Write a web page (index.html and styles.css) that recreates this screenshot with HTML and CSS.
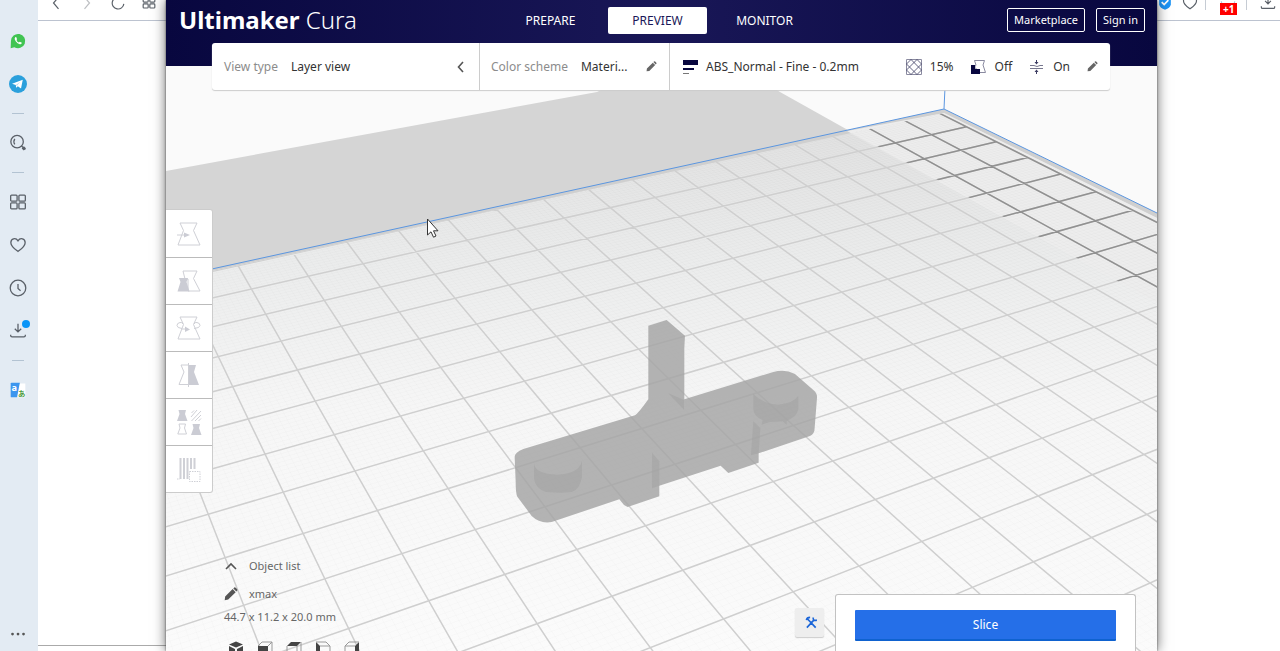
FILE: index.html
```html
<!DOCTYPE html>
<html lang="en">

<head>
    <meta charset="UTF-8">
    <meta name="viewport" content="width=device-width, initial-scale=1.0">
    <title>Ultimaker Cura</title>
    <link rel="stylesheet" href="styles.css">
</head>

<body>
    <!-- shared icons -->
    <svg class="defs" aria-hidden="true">
        <symbol id="pencil" viewBox="0 0 12 12">
            <path d="M1 8.2 7.4 1.8 10 4.4 3.6 10.8 .6 11.3zM8 1.2 8.8.5Q9.4 0 10 .6L11.3 1.9Q11.8 2.5 11.3 3.1L10.6 3.8z" />
        </symbol>
        <symbol id="grid" viewBox="0 0 24 24">
            <rect x="5" y="6" width="6" height="5" rx="1" />
            <rect x="13" y="6" width="6" height="5" rx="1" />
            <rect x="5" y="13" width="6" height="5" rx="1" />
            <rect x="13" y="13" width="6" height="5" rx="1" />
        </symbol>
        <symbol id="heart" viewBox="0 0 24 24">
            <path d="M12 19C8 16 4.200 13.500 4.200 9.500 4.200 5 9.500 3.500 12 7.500 14.500 3.500 19.800 5 19.800 9.500 19.800 13.500 16 16 12 19z" />
        </symbol>
        <symbol id="download" viewBox="0 0 24 24">
            <path d="M12 4V13M8.500 9.500 12 13 15.500 9.500M4 16V17Q4 18.500 5.500 18.500H18.500Q20 18.500 20 17V16" />
        </symbol>
    </svg>

    <div class="browser">
        <nav class="sidebar">
            <a href="#" aria-label="WhatsApp"><svg viewBox="0 0 24 24">
                    <path d="M4 20 4.300 12A7.800 7.800 0 1 1 8 18.700z" fill="#41c452" />
                    <path d="M8.800 8Q7.500 9.500 9.500 12.200T14 15.500Q16 16 16.200 14L14 12.800 13 13.700Q11.200 13 10.300 10.800L11 10 10 7.700z" fill="#fff" />
                </svg></a>
            <a href="#" aria-label="Telegram"><svg viewBox="0 0 24 24">
                    <circle cx="12" cy="12" r="9.800" fill="#2ba0dc" />
                    <path d="M5.500 11.800 17.200 7.300 15.300 17 11.800 14.500 10 16.200 9.600 13.200z" fill="#fff" />
                    <path d="M9.600 13.200 14.500 9.500 10.800 14z" fill="#b9d9ee" />
                </svg></a>
            <hr>
            <button type="button" aria-label="Search"><svg class="line" viewBox="0 0 24 24">
                    <circle cx="11" cy="10.500" r="6.800" />
                    <path d="M8.500 7.500Q6.500 10.500 8.500 13.500M15.800 15.200 20 19" />
                    <path d="M17.200 16.800 19.500 19" stroke-width="3.500" />
                </svg></button>
            <hr>
            <button type="button" aria-label="Speed dial"><svg class="line" viewBox="0 0 24 24">
                    <rect x="4" y="4.500" width="7" height="6.500" rx="1" />
                    <rect x="13" y="4.500" width="7" height="6.500" rx="1" />
                    <rect x="4" y="13" width="7" height="6.500" rx="1" />
                    <rect x="13" y="13" width="7" height="6.500" rx="1" />
                </svg></button>
            <button type="button" aria-label="Bookmarks"><svg class="line"><use href="#heart" /></svg></button>
            <button type="button" aria-label="History"><svg class="line" viewBox="0 0 24 24">
                    <circle cx="12" cy="12" r="8.500" />
                    <path d="M12 7.500V12.500L14.800 15" />
                </svg></button>
            <button type="button" aria-label="Downloads"><svg class="line"><use href="#download" /></svg><span class="dot"></span></button>
            <hr>
            <button type="button" aria-label="Translate"><svg viewBox="0 0 24 24">
                    <path d="M12 5H20V20H10z" fill="#fff" />
                    <path d="M5 4H14L11 20H5Q4 20 4 19V5Q4 4 5 4z" fill="#3d96ee" />
                    <text x="5" y="13" font-size="10" font-weight="700" fill="#fff">a</text>
                    <text x="12" y="18" font-size="8" font-weight="700" fill="#4a9a3c">あ</text>
                </svg></button>
            <button type="button" class="more" aria-label="More"><svg viewBox="0 0 24 24" fill="#555">
                    <circle cx="6" cy="12" r="1.500" />
                    <circle cx="12" cy="12" r="1.500" />
                    <circle cx="18" cy="12" r="1.500" />
                </svg></button>
        </nav>
        <div class="page">
            <div class="topbar">
                <div class="nav-buttons">
                    <button type="button" aria-label="Back"><svg class="line" viewBox="0 0 24 24"><path d="M15 5 9 12 15 19" /></svg></button>
                    <button type="button" aria-label="Forward" disabled><svg class="line" viewBox="0 0 24 24"><path d="M9 5 15 12 9 19" /></svg></button>
                    <button type="button" aria-label="Reload"><svg class="line" viewBox="0 0 24 24"><path d="M19 13A7 7 0 1 1 14 5.500" /></svg></button>
                    <button type="button" aria-label="Tabs"><svg class="line" viewBox="0 0 24 24"><use href="#grid" /></svg></button>
                </div>
                <div class="extensions">
                    <svg viewBox="0 0 24 24">
                        <path d="M5 4H19V14Q18 18 12 20 6 18 5 14z" fill="#1b93f5" />
                        <path d="M8 11 11 14 16 8.500" fill="none" stroke="#fff" stroke-width="2" />
                    </svg>
                    <svg class="line"><use href="#heart" /></svg>
                    <i></i>
                    <span class="ext"><svg class="line" viewBox="0 0 24 24"><path d="M4 10Q4 14 8 14H16Q20 14 20 10" stroke="#b4cbdc" /></svg><b>+1</b></span>
                    <i></i>
                    <svg class="line save"><use href="#download" /></svg>
                </div>
            </div>
            <div class="status"></div>
        </div>
    </div>

    <main class="cura">
        <header class="header">
            <h1><b>Ultimaker</b> Cura</h1>
            <nav class="stages">
                <button type="button">PREPARE</button>
                <button type="button" class="on">PREVIEW</button>
                <button type="button">MONITOR</button>
            </nav>
            <div class="account">
                <button type="button">Marketplace</button>
                <button type="button">Sign in</button>
            </div>
        </header>

        <section class="stage">
            <svg class="scene" viewBox="166 66 991 585" preserveAspectRatio="xMidYMin slice" aria-hidden="true">
                <defs>
                    <linearGradient id="bed" gradientUnits="userSpaceOnUse" x1="0" y1="110" x2="0" y2="651">
                        <stop offset="0" stop-color="#e0e0e0" />
                        <stop offset=".28" stop-color="#ebecec" />
                        <stop offset=".55" stop-color="#f6f6f6" />
                        <stop offset="1" stop-color="#fbfbfb" />
                    </linearGradient>
                    <clipPath id="bedClip">
                        <path d="M166 281 944 113 1157 218V651H166z" />
                    </clipPath>
                    <clipPath id="clearClip">
                        <path d="M847 129 944 112 1157 218V303z" />
                    </clipPath>
                </defs>
                <path d="M166 171 597 92 650 66H735L780 92 1157 303V651H166z" fill="#d5d5d5" />
                <path d="M166 279 944 109 1157 213V651H166z" fill="#cfcfcf" />
                <path d="M166 281 944 113 1157 218V651H166z" fill="url(#bed)" />
                <path d="M847 131 944 113 1157 218V303z" fill="#ededed" />
                <g fill="none" clip-path="url(#bedClip)">
                    <path id="fine" stroke="#000" stroke-opacity=".014" />
                    <path id="coarse" stroke="#cfcfcf" stroke-width="1.500" />
                    <path id="coarseDark" stroke="#919191" stroke-width="1.500" clip-path="url(#clearClip)" />
                </g>
                <path d="M166 279 944 109 1157 213M944 109 946 66" fill="none" stroke="#5b96e0" />

                <!-- the part on the build plate -->
                <g transform="translate(480 300) scale(.3333)">
                    <path d="M505 77 560 60 615 107 613 145V298L880 216Q915 206 945 222L1000 270Q1013 280 1011 295L1004 385Q1004 402 990 408L836 460V488L745 519 722 497 538 557V589L443 621 432 615 418 598 215 666Q180 672 155 648L112 590Q107 580 107 545L104 470Q104 458 130 447L465 346Q475 340 505 298z" fill="#a3a3a3" fill-opacity=".82" />
                    <g fill="#a4a4a4" fill-opacity=".6">
                        <path d="M162 490Q165 523 232 524 298 521 306 482V530Q300 568 275 576L245 578 198 576Q165 565 162 535z" />
                        <path d="M820 282Q850 312 895 314 940 310 955 288V328Q950 352 920 362V374L908 364 870 366 845 374 848 360Q820 350 820 325z" />
                        <path d="M516 458 538 484V557L516 565z" />
                        <path d="M820 364 841 384 836 460 813 466z" />
                        <path d="M565 280 612 300V329z" />
                    </g>
                </g>

                <path d="M427.500 219V235L431 231.800 433.500 237.200 436 236 433.500 230.800H438z" fill="#fff" stroke="#333" />
            </svg>

            <div class="bar">
                <button type="button" class="cell">
                    <span class="label">View type</span>
                    <span>Layer view</span>
                    <svg class="end" viewBox="0 0 12 12" width="12" height="12"><path d="M8 1 3.500 6 8 11" fill="none" stroke="#555" stroke-width="1.600" /></svg>
                </button>
                <button type="button" class="cell">
                    <span class="label">Color scheme</span>
                    <span>Materi...</span>
                    <svg class="pen end"><use href="#pencil" /></svg>
                </button>
                <button type="button" class="cell settings">
                    <svg width="16" height="16" viewBox="0 0 16 16">
                        <path d="M0 1H15V6H0zM0 9H11V11H0z" fill="#08073f" />
                        <path d="M0 14H6V15H0z" fill="#777" />
                    </svg>
                    <span class="profile">ABS_Normal - Fine - 0.2mm</span>
                    <span class="setting">
                        <svg width="16" height="16" viewBox="0 0 16 16" fill="none" stroke="#3c3c62">
                            <path d="M.5.5H15.500V15.500H.5z" stroke="#8a8aa0" />
                            <path d="M.5 5 5 .5 15.500 11M.5 11 11 .5 15.500 5M.5 5 11 15.500 15.500 11M.5 11 5 15.500 15.500 5" stroke-width=".8" />
                        </svg>15%</span>
                    <span class="setting">
                        <svg width="16" height="16" viewBox="0 0 16 16">
                            <path d="M3.500 1.500H13.500L12 6 14.500 13.500H5V9H3L5 6z" fill="#fff" stroke="#8a8aa0" />
                            <path d="M0 6H4V10H9V15H0z" fill="#08073f" />
                        </svg>Off</span>
                    <span class="setting">
                        <svg width="16" height="16" viewBox="0 0 16 16" fill="none" stroke="#3c3c62">
                            <path d="M1 6.500H5Q8 8.500 11 6.500H14M1 9.500H14" stroke="#77778e" />
                            <path d="M7.500 1V5M7.500 11V15" />
                            <path d="M5.500 3 7.500 5.500 9.500 3zM5.500 13 7.500 10.500 9.500 13z" fill="#3c3c62" stroke="none" />
                        </svg>On</span>
                    <svg class="pen end"><use href="#pencil" /></svg>
                </button>
            </div>

            <div class="tools">
                <button type="button" aria-label="Move" disabled><svg viewBox="0 0 24 24">
                        <path class="o" d="M3 1H20L16.500 8.500 23 23H1L6.500 8.500z" />
                        <path class="o" d="M0 13H8" />
                        <path class="f" d="M7 10.500 13 13 7 15.500z" />
                    </svg></button>
                <button type="button" aria-label="Scale" disabled><svg viewBox="0 0 24 24">
                        <path class="o" d="M6 2H20L16.500 9.500 23 22H11V10H8z" />
                        <path class="f" d="M2 9H11L9.500 13 12.500 22.500H.5L3.500 13z" />
                    </svg></button>
                <button type="button" aria-label="Rotate" disabled><svg viewBox="0 0 24 24">
                        <path class="o" d="M3 1H20L16.500 8.500 23 23H1L6.500 8.500z" />
                        <path class="o" d="M5 12.500Q0 12 0 9.500T3 6.500Q5 6 6 8M17 12.500Q23 12 23 9.500T20 6.500Q18 6 17 8M5 13H9" />
                        <path class="f" d="M8 10.500 13 13.500 8 16z" />
                    </svg></button>
                <button type="button" aria-label="Mirror" disabled><svg viewBox="0 0 24 24">
                        <path class="o" d="M11 2H4L7 9 2 21.500H11M11.500 0V24" />
                        <path class="f" d="M12 2H19L17 9 22 22H12z" />
                    </svg></button>
                <button type="button" aria-label="Per model settings" disabled><svg viewBox="0 0 24 24">
                        <path class="f" d="M1.500 0H9L8 4 10.500 11H0L2.500 4zM15.500 14H23L22 18 24.500 25H14L16.500 18z" />
                        <path class="o" d="M2 14H8.500L7.500 18 9.500 24H.8L3 18zM14.500 11 24 1M14 7 20 0M18 11 24 5M14.500 3 17 .5M21.500 11 24 8.500" />
                    </svg></button>
                <button type="button" aria-label="Support blocker" disabled><svg viewBox="0 0 24 24">
                        <path class="o" d="M3.500 1V22M7 1V22M10.500 1V22M14 1V12M17.500 1V12" stroke-width="2" />
                        <path class="o" d="M12.500 14.500H23V24.500H12.500zM0 22H3" stroke-dasharray="1.500 1" />
                    </svg></button>
            </div>

            <div class="object-info">
                <button type="button" class="row"><svg viewBox="0 0 14 14"><path d="M2 10 7 5 12 10" fill="none" stroke="#555" stroke-width="1.600" /></svg>Object list</button>
                <button type="button" class="row"><svg viewBox="0 0 14 14"><use href="#pencil" /></svg>xmax</button>
                <p>44.7 x 11.2 x 20.0 mm</p>
                <div class="cameras">
                    <button type="button" aria-label="3D view"><svg viewBox="0 0 16 16">
                            <path d="M1 3.500 8 .5 15 3.500 8 6.500zM1 5 7 8V15.500L1 13zM15 5 9 8V15.500L15 13z" />
                        </svg></button>
                    <button type="button" aria-label="Front view"><svg viewBox="0 0 16 16">
                            <path d="M1 5H11V15H1z" />
                            <path class="edge" d="M1 5 5 1H15V11L11 15M11 5 15 1" />
                        </svg></button>
                    <button type="button" aria-label="Top view"><svg viewBox="0 0 16 16">
                            <path d="M1 5 5 1H15L11 5z" />
                            <path class="edge" d="M1 5V15H11V5M15 1V11L11 15" />
                        </svg></button>
                    <button type="button" aria-label="Left view"><svg viewBox="0 0 16 16">
                            <path d="M1 1 5 5V15L1 11z" />
                            <path class="edge" d="M1 1H11L15 5V15H5M5 5H15" />
                        </svg></button>
                    <button type="button" aria-label="Right view"><svg viewBox="0 0 16 16">
                            <path d="M15 1 11 5V15L15 11z" />
                            <path class="edge" d="M15 1H5L1 5V15H11M1 5H11" />
                        </svg></button>
                </div>
            </div>

            <div class="actions">
                <button type="button" class="plugin" aria-label="Post processing"><svg viewBox="0 0 14 14" fill="none" stroke="#1c66d8" stroke-width="1.800">
                        <path d="M2.500 3 11.500 12.500M1.500 4.500Q2 1.500 5.500 1.500M2 12.500 9.500 4.500M9 1.500Q7.800 5.500 12.800 4.500" />
                    </svg></button>
                <div class="slice-panel">
                    <button type="button" class="slice">Slice</button>
                </div>
            </div>
        </section>
    </main>

    <script>
        // build plate grid: cell (i, j) -> screen point, counted from the back corner
        const project = function (i, j) {
            const w = 1 - 0.013905 * i - 0.025046 * j;
            const x = (938.2 - 47.065 * i + 4.082 * j) / w;
            const y = (112.6 + 5.871 * i + 11.011 * j) / w;
            return x.toFixed(1) + " " + y.toFixed(1);
        };

        // lines in both directions, one every `step` cells
        const gridPath = function (size, step) {
            let d = "";
            for (let n = 0; n <= size / step; n++) {
                const k = n * step;
                d += `M${project(k, 0)}L${project(k, size)}`;
                d += `M${project(0, k)}L${project(size, k)}`;
            }
            return d;
        };

        const coarse = gridPath(23, 1);
        document.querySelector("#fine").setAttribute("d", gridPath(23, 0.1));
        document.querySelector("#coarse").setAttribute("d", coarse);
        document.querySelector("#coarseDark").setAttribute("d", coarse);
    </script>
</body>

</html>
```
FILE: styles.css
```css
* {
    box-sizing: border-box;
}

body {
    margin: 0;
    height: 100vh;
    overflow: hidden;
    position: relative;
    background: #fff;
    color: #333;
    font: 12px/16px "Noto Sans", "Noto Sans CJK JP", sans-serif;
}

button {
    margin: 0;
    padding: 0;
    border: none;
    background: none;
    color: inherit;
    font: inherit;
    cursor: pointer;
}

svg {
    display: block;
    flex: none;
}

.defs {
    position: absolute;
    width: 0;
    height: 0;
}

.line {
    fill: none;
    stroke: #5a6068;
    stroke-width: 1.4;
}

/* browser behind the window */
.browser {
    display: flex;
    height: 100%;
}

.sidebar {
    display: flex;
    flex-direction: column;
    align-items: center;
    width: 38px;
    padding: 19px 2px 5px 0;
    background: #e3ebf3;
}

.sidebar a,
.sidebar button {
    position: relative;
    display: flex;
    align-items: center;
    height: 43px;
}

.sidebar svg {
    width: 22px;
    height: 22px;
}

.sidebar hr {
    width: 12px;
    height: 1px;
    margin: 8px 0 7px;
    border: none;
    background: #b3c3d2;
}

.dot {
    position: absolute;
    top: 11px;
    right: -1px;
    width: 8px;
    height: 8px;
    border-radius: 50%;
    background: #0a95f7;
}

.sidebar .more {
    height: 24px;
    margin-top: auto;
}

.page {
    flex: 1;
    display: flex;
    flex-direction: column;
}

.topbar {
    display: flex;
    justify-content: space-between;
    align-items: flex-end;
    height: 21px;
    padding: 0 2px 7px 8px;
    border-bottom: 1px solid #bcc3d0;
}

.topbar svg {
    width: 20px;
    height: 20px;
}

.nav-buttons {
    display: flex;
    gap: 11px;
}

.nav-buttons button:disabled {
    opacity: .4;
}

.extensions {
    display: flex;
    align-items: center;
    gap: 5px;
}

.extensions i {
    width: 1px;
    height: 14px;
    background: #c6ccd4;
}

.extensions .save {
    margin-left: 6px;
}

.ext {
    position: relative;
    padding: 0 3px 0 7px;
}

.ext b {
    position: absolute;
    top: 10px;
    left: 9px;
    padding: 0 3px;
    background: #f00;
    color: #fff;
    font-size: 10px;
    line-height: 12px;
}

.status {
    width: 128px;
    height: 6px;
    margin-top: auto;
    border-top: 1px solid #aaa;
}

/* Cura window */
.cura {
    position: absolute;
    top: 0;
    bottom: 0;
    left: 166px;
    right: 123px;
    display: flex;
    flex-direction: column;
    background: #fafafa;
    box-shadow: 0 0 2px #555, 0 0 12px rgba(0, 0, 0, .6);
}

.header {
    display: grid;
    grid-template-columns: 1fr auto 1fr;
    align-items: start;
    height: 66px;
    padding: 7px 12px 0 4px;
    background: linear-gradient(90deg, #08073f, #191757 50%, #08073f);
    color: #fff;
}

.header h1 {
    margin: 0 0 0 9px;
    font-size: 24px;
    line-height: 26px;
    font-weight: 300;
}

.header b {
    font-weight: 700;
}

.stages {
    display: flex;
    gap: 8px;
}

.stages button {
    width: 99px;
    height: 27px;
    border-radius: 2px;
}

.stages .on {
    background: #fff;
    color: #191757;
}

.account {
    display: flex;
    justify-content: flex-end;
    gap: 11px;
    padding-top: 1px;
}

.account button {
    height: 24px;
    padding: 0 6px;
    border: 1px solid #fff;
    border-radius: 2px;
    font-size: 11px;
}

.stage {
    position: relative;
    flex: 1;
    min-height: 0;
}

.scene {
    position: absolute;
    width: 100%;
    height: 100%;
}

.bar {
    position: relative;
    display: grid;
    grid-template-columns: 267px 190px 1fr;
    height: 47px;
    margin: -23px 47px 0 46px;
    border-radius: 3px;
    background: #fff;
    box-shadow: 0 1px 1px #ccc;
}

.cell {
    display: flex;
    align-items: center;
    gap: 13px;
    padding: 0 12px;
    text-align: left;
}

.cell + .cell {
    padding-left: 11px;
    border-left: 1px solid #ccc;
}

.label {
    color: #8c8c8c;
}

.end {
    margin-left: auto;
}

.pen {
    width: 11px;
    height: 11px;
    fill: #666;
}

.cell.settings {
    gap: 17px;
    padding-left: 13px;
}

.settings > svg:first-child {
    margin-right: -10px;
}

.profile {
    flex: 1;
}

.setting {
    display: flex;
    align-items: center;
    gap: 8px;
}

/* left tool strip */
.tools {
    position: absolute;
    top: 143px;
    left: 0;
    width: 47px;
    border: 1px solid #ccc;
    border-left: none;
    border-radius: 0 3px 3px 0;
    background: #fff;
}

.tools button {
    display: flex;
    align-items: center;
    justify-content: center;
    width: 100%;
    height: 47px;
}

.tools button + button {
    border-top: 1px solid #bbb;
}

.tools svg {
    width: 24px;
    height: 24px;
    overflow: visible;
}

.tools .o {
    fill: none;
    stroke: #cfd0d6;
}

.tools .f {
    fill: #cbccd4;
}

.object-info {
    position: absolute;
    left: 58px;
    bottom: -6px;
    color: #666;
    font-size: 11px;
}

.row {
    display: flex;
    align-items: center;
    gap: 11px;
    height: 28px;
}

.row svg {
    width: 14px;
    height: 14px;
    fill: #555;
}

.object-info p {
    margin: 1px 0 16px;
}

.cameras {
    display: flex;
    gap: 13px;
    padding-left: 4px;
}

.cameras svg {
    width: 16px;
    height: 16px;
    fill: #444;
}

.cameras .edge {
    fill: none;
    stroke: #999;
}

.actions {
    position: absolute;
    right: 21px;
    bottom: 0;
    display: flex;
    align-items: flex-start;
    gap: 11px;
}

.plugin {
    display: flex;
    align-items: center;
    justify-content: center;
    width: 29px;
    height: 29px;
    margin-top: 14px;
    padding-left: 4px;
    border-radius: 2px;
    background: #eee;
    box-shadow: 0 1px 1px #ccc;
}

.plugin svg {
    width: 13px;
    height: 13px;
}

.slice-panel {
    width: 301px;
    padding: 15px 19px 10px;
    border: 1px solid #c2c2c2;
    border-bottom: none;
    border-radius: 3px 3px 0 0;
    background: #fff;
}

.slice {
    width: 100%;
    height: 31px;
    border-bottom: 2px solid #0f62cf;
    border-radius: 1px;
    background: #256fe8;
    color: #fff;
}
```
